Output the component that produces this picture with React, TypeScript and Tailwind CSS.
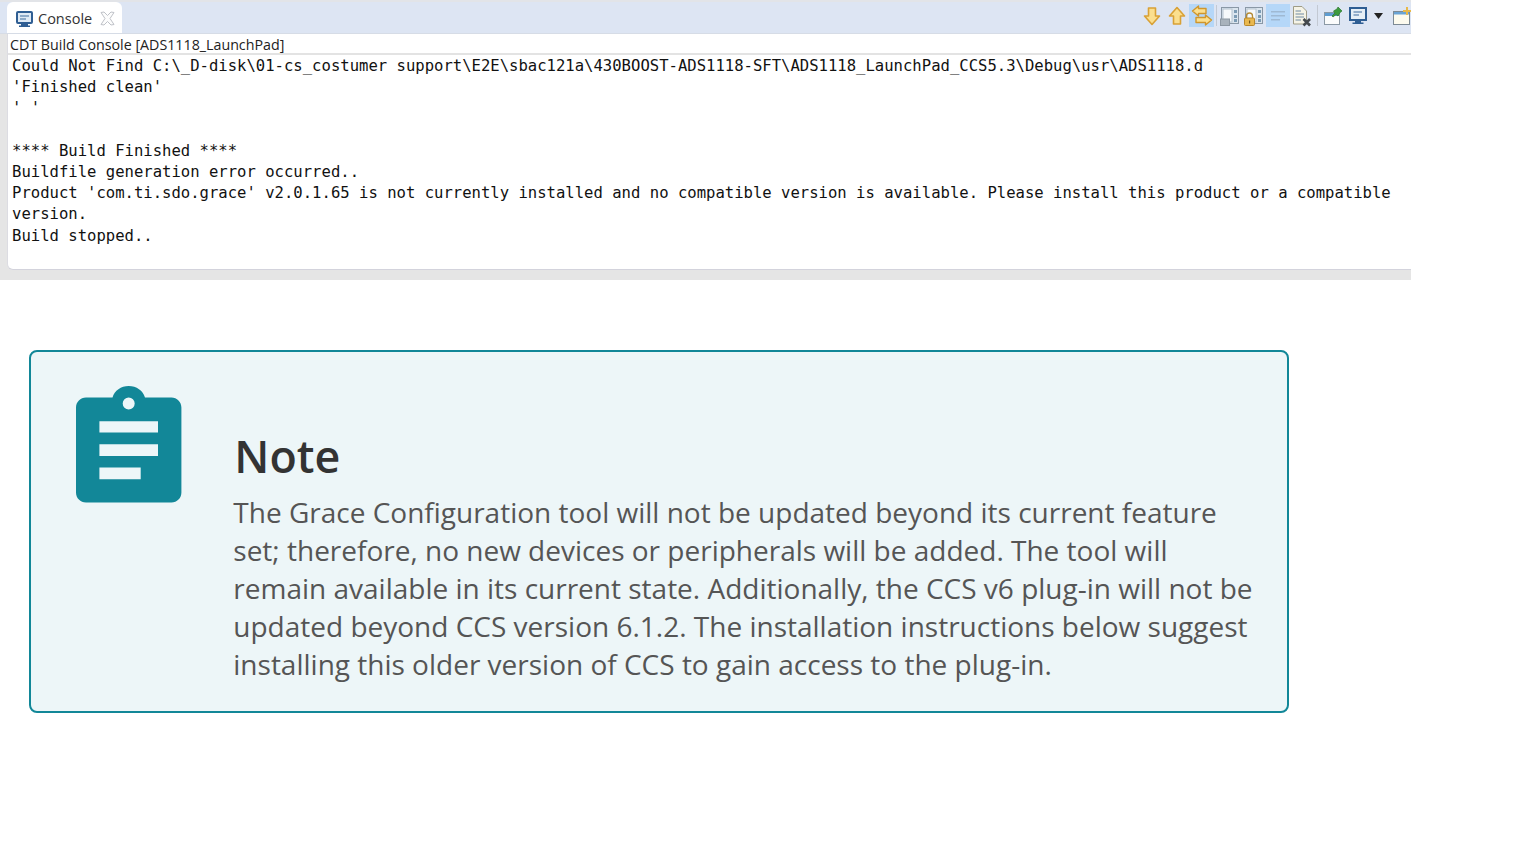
const mono = "font-['DejaVu_Sans_Mono',monospace]";

function Btn({ active, w = "w-6", children }: { active?: boolean; w?: string; children: React.ReactNode }) {
  return <div className={`${w} h-[23px] flex items-center justify-center ${active ? "bg-[#b5d7f8]" : ""}`}>{children}</div>;
}
const Sep = ({ w }: { w: string }) => (
  <div className={`${w} h-[23px] flex items-center justify-center`}>
    <div className="w-px h-[21px] bg-[#c3c9d3]" />
  </div>
);

function ArrowV({ up }: { up?: boolean }) {
  return (
    <svg width="18" height="20" viewBox="0 0 18 20">
      <path d={up ? "M9 1.500 L16.500 10 H12.500 V18 H5.500 V10 H1.500 Z" : "M9 18.500 L16.500 10 H12.500 V2 H5.500 V10 H1.500 Z"} fill="#fbdf8e" stroke="#d9a136" strokeWidth="1.600" strokeLinejoin="round" />
    </svg>
  );
}
function Swap() {
  return (
    <svg width="22" height="21" viewBox="0 0 22 21">
      <path d="M1.500 6 L7.500 1 V3.500 H15 V8.500 H7.500 V11 Z" fill="#fbdf8e" stroke="#d0962c" strokeWidth="1.400" strokeLinejoin="round" />
      <path d="M20.500 15 L14.500 10 V12.500 H5 V17.500 H14.500 V20 Z" fill="#fbdf8e" stroke="#d0962c" strokeWidth="1.400" strokeLinejoin="round" />
    </svg>
  );
}
function Panes({ lock }: { lock?: boolean }) {
  return (
    <svg width="20" height="20" viewBox="0 0 20 20">
      <rect x="1.500" y="1.500" width="17" height="16" fill="#dbe5ee" stroke="#8a98a6" />
      <rect x="3" y="3" width="9" height="13" fill="#f6f9fb" stroke="#b6c3cf" />
      <rect x="14" y="4" width="3" height="3" fill="#7d9cb5" />
      <rect x="14" y="9" width="3" height="3" fill="#7d9cb5" />
      <rect x="14" y="13" width="3" height="3" fill="#7d9cb5" />
      {lock ? (
        <>
          <path d="M2.500 12 V10 a3 3 0 0 1 6 0 V12" fill="none" stroke="#b58b36" strokeWidth="1.300" />
          <rect x="0.500" y="12" width="10" height="7.500" rx="1" fill="#e9b84f" stroke="#b8872c" />
          <rect x="5" y="14.500" width="1.200" height="3" fill="#7a5a1c" />
        </>
      ) : (
        <rect x="0.500" y="13" width="9" height="6.500" fill="#a9b3bc" stroke="#8e99a3" />
      )}
    </svg>
  );
}
function Lines() {
  return (
    <svg width="16" height="14" viewBox="0 0 16 14">
      <rect x="1" y="2" width="14" height="1.500" fill="#9fb9d3" />
      <rect x="1" y="6" width="14" height="1.500" fill="#9fb9d3" />
      <rect x="1" y="10" width="9" height="1.500" fill="#9fb9d3" />
    </svg>
  );
}
function DocX() {
  return (
    <svg width="20" height="22" viewBox="0 0 20 22">
      <path d="M1.500 1.500 H10 L14.500 6 V19 H1.500 Z" fill="#f5f3e6" stroke="#9f9c86" />
      <path d="M3.500 6 H9 M3.500 9 H12 M3.500 12 H12 M3.500 15 H9" stroke="#6f8aa3" strokeWidth="1" />
      <path d="M11.500 14 L18 20.500 M18 14 L11.500 20.500" stroke="#44494d" strokeWidth="2.600" />
    </svg>
  );
}
function Pin() {
  return (
    <svg width="20" height="20" viewBox="0 0 20 20">
      <rect x="1.500" y="6.500" width="15" height="12" fill="#fbfcfc" stroke="#8b99a5" />
      <rect x="2" y="7" width="14" height="3" fill="#5f9dd1" />
      <path d="M9 10 L12 7 L10.500 5 L14 3 L15 1 L19 5 L17 6.500 L15 10 L13 8.500 L10 11 Z" fill="#3e9b3e" stroke="#2d7a2d" strokeWidth="0.700" />
    </svg>
  );
}
function Monitor() {
  return (
    <svg width="18" height="18" viewBox="0 0 18 18">
      <rect x="1" y="1" width="16" height="12" fill="#e6eff6" stroke="#2f5e93" strokeWidth="2" />
      <path d="M4.500 5 H13 M4.500 8 H10" stroke="#3f6d9d" strokeWidth="1.200" />
      <path d="M6 14 H12 V15.500 H14.500 V17 H3.500 V15.500 H6 Z" fill="#2f5e93" />
    </svg>
  );
}
function NewWin() {
  return (
    <svg width="20" height="20" viewBox="0 0 20 20" className="shrink-0">
      <rect x="1.500" y="5.500" width="16" height="13" fill="#fdfbee" stroke="#7d8a94" />
      <rect x="2" y="6" width="15" height="2.500" fill="#6aa4d5" />
      <path d="M15 1 V9 M11 5 H19" stroke="#e7b84a" strokeWidth="2" />
    </svg>
  );
}

export default function App() {
  return (
    <div className="w-[1536px] h-[864px] bg-white overflow-hidden font-['Open_Sans',sans-serif]">
      <section className="w-[1411px] h-[280px] bg-[#e5e5e5] flex flex-col">
        <div className="h-[34px] bg-[#dde5f3] border-t-2 border-t-[#e2e4e8] border-b border-b-[#d6dce6] flex pl-[7px] justify-between">
          <div className="w-[115px] h-[31px] bg-white rounded-t-[6px] flex items-center pl-[9px] gap-[5px] pt-[3px]">
            <svg width="17" height="17" viewBox="0 0 17 17">
              <rect x="1" y="1" width="15" height="11" rx="1" fill="#dfeaf5" stroke="#2f5e93" strokeWidth="2" />
              <path d="M4 5 H13 M4 8 H10" stroke="#3f6d9d" strokeWidth="1.200" />
              <path d="M5 13 H12 V14.500 H14 V16 H3 V14.500 H5 Z" fill="#2f5e93" />
            </svg>
            <span className="text-[14.500px] text-[#333] leading-none">Console</span>
            <svg width="15" height="15" viewBox="0 0 15 15" className="ml-[3px] -mt-[2px]">
              <path d="M1 1.500 L4 1 L7.500 4.500 L11 1 L14 1.500 L10 7.500 L14 13.500 L11 14 L7.500 10.500 L4 14 L1 13.500 L5 7.500 Z" fill="#fcfcfc" stroke="#bfc2c8" />
            </svg>
          </div>
          <div className="flex items-center w-[272px] h-[23px] mt-[2px] overflow-hidden">
            <Btn w="w-[25px]"><ArrowV /></Btn>
            <Btn w="w-[25px]"><ArrowV up /></Btn>
            <Btn w="w-[25px]" active><Swap /></Btn>
            <Sep w="w-[4px]" />
            <Btn><Panes /></Btn>
            <Btn><Panes lock /></Btn>
            <Btn active><Lines /></Btn>
            <Btn><DocX /></Btn>
            <Sep w="w-[6px]" />
            <Btn w="w-[26px]"><Pin /></Btn>
            <Btn><Monitor /></Btn>
            <div className="w-4 flex justify-center"><svg width="9" height="6" viewBox="0 0 9 6"><path d="M0 0 H9 L4.500 6 Z" fill="#222" /></svg></div>
            <div className="w-[25px] pl-[6px] flex overflow-hidden"><NewWin /></div>
          </div>
        </div>
        <div className="ml-[7px] h-[236px] bg-white rounded-bl-[6px] border-b border-[#d3d3dc] border-l border-l-[#dcdce2] flex flex-col">
          <div className="h-[21px] pl-[2px] border-b-2 border-[#e3e3e3] text-[14.250px] leading-[21px] text-[#222] whitespace-nowrap">CDT Build Console [ADS1118_LaunchPad]</div>
          <pre className={`${mono} pl-[4px] pt-[0.600px] text-[15.580px] leading-[21.250px] text-[#111] whitespace-pre`}>{`Could Not Find C:\\_D-disk\\01-cs_costumer support\\E2E\\sbac121a\\430BOOST-ADS1118-SFT\\ADS1118_LaunchPad_CCS5.3\\Debug\\usr\\ADS1118.d
'Finished clean'
' '

**** Build Finished ****
Buildfile generation error occurred..
Product 'com.ti.sdo.grace' v2.0.1.65 is not currently installed and no compatible version is available. Please install this product or a compatible
version.
Build stopped..`}</pre>
        </div>
      </section>
      <section className="ml-[29px] mt-[70px] w-[1260px] h-[363px] bg-[#edf6f8] border-2 border-[#128798] rounded-[8px] flex pl-[45.300px] pt-[33.700px]">
        <svg width="106" height="117" viewBox="0 0 106 117" className="shrink-0">
          <path fillRule="evenodd" fill="#128798" d="M10 11.600 H36.500 C38.500 4.500 45 0 52.700 0 C60.500 0 67 4.500 69 11.600 H95.400 C101 11.600 105.400 16 105.400 21.600 V106.600 C105.400 112.200 101 116.600 95.400 116.600 H10 C4.400 116.600 0 112.200 0 106.600 V21.600 C0 16 4.400 11.600 10 11.600 Z M52.700 11.600 A6 6 0 1 0 52.700 23.600 A6 6 0 1 0 52.700 11.600 Z M23.400 35.300 V46.600 H82 V35.300 Z M23.400 58.300 V70 H82 V58.300 Z M23.400 81.600 V93.300 H64.700 V81.600 Z" />
        </svg>
        <div className="ml-[51px] flex flex-col">
          <h2 className="text-[44.800px] font-semibold leading-[60px] text-[#333] mt-[40px] ml-[1px]">Note</h2>
          <p className="text-[28px] leading-[38px] text-[#555] w-[1025px] mt-[7px]">
            The Grace Configuration tool will not be updated beyond its current feature set; therefore, no new devices or peripherals will be added. The tool will remain available in its current state. Additionally, the CCS v6 plug-in will not be updated beyond CCS version 6.1.2. The installation instructions below suggest installing this older version of CCS to gain access to the plug-in.
          </p>
        </div>
      </section>
    </div>
  );
}
